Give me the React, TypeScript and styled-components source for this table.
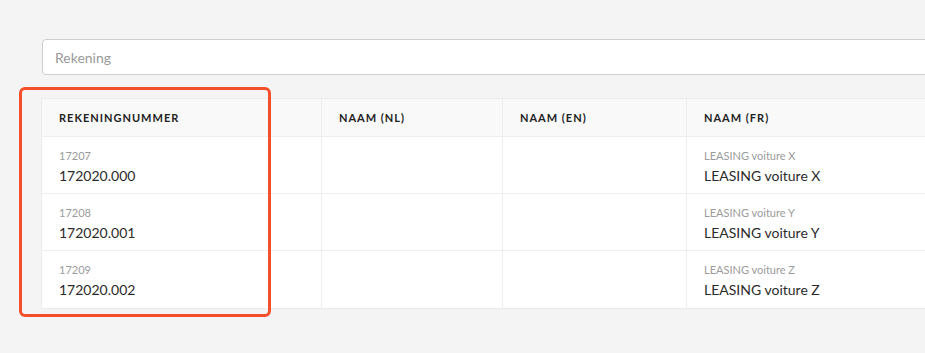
import React from "react";
import styled, { createGlobalStyle } from "styled-components";

const GlobalStyle = createGlobalStyle`
  html {
    overflow: hidden;
  }
  body {
    margin: 0;
    padding: 0;
    min-height: 353px;
    background: #f4f4f4;
    font-family: Lato, "Open Sans", "Liberation Sans", sans-serif;
    color: #333;
  }
`;

const Page = styled.div`
  position: relative;
  width: 1100px;
  padding: 39px 0 44px 42px;
`;

const SearchInput = styled.input`
  display: block;
  box-sizing: border-box;
  width: 100%;
  height: 36px;
  padding: 0 12px;
  border: 1px solid #cdcdcd;
  border-radius: 4px;
  background: #fff;
  font-family: inherit;
  font-size: 14px;
  color: #333;
  outline: none;

  &::placeholder {
    color: #9a9a9a;
  }
`;

const Table = styled.div`
  display: grid;
  grid-template-columns: 280px 181px 184px 1fr;
  margin-top: 24px;
  background: #fff;
  box-shadow: 0 0 0 1px #ececec, 0 1px 1px rgba(0, 0, 0, 0.04);
`;

const HeadCell = styled.div`
  box-sizing: border-box;
  height: 38px;
  display: flex;
  align-items: center;
  padding: 0 17px;
  background: #f9f9f9;
  border-right: 1px solid #eeeeee;
  border-bottom: 1px solid #eeeeee;
  font-size: 11px;
  font-weight: 700;
  letter-spacing: 1px;
  color: #222;
  text-transform: uppercase;
`;

const Cell = styled.div<{ $last?: boolean }>`
  box-sizing: border-box;
  height: 57px;
  display: flex;
  flex-direction: column;
  padding: 11px 17px 0;
  border-right: 1px solid #eeeeee;
  border-bottom: ${(p) => (p.$last ? "none" : "1px solid #eeeeee")};
`;

const SubText = styled.div`
  font-size: 11px;
  line-height: 15px;
  color: #9b9b9b;
`;

const MainText = styled.div`
  margin-top: 3px;
  font-size: 14px;
  line-height: 19px;
  color: #2b2b2b;
`;

const Highlight = styled.div`
  position: absolute;
  left: 19px;
  top: 87px;
  width: 252px;
  height: 230px;
  box-sizing: border-box;
  border: 3px solid #f44e2b;
  border-radius: 6px;
  pointer-events: none;
`;

type Row = { code: string; number: string; fr: string };

const rows: Row[] = [
  { code: "17207", number: "172020.000", fr: "LEASING voiture X" },
  { code: "17208", number: "172020.001", fr: "LEASING voiture Y" },
  { code: "17209", number: "172020.002", fr: "LEASING voiture Z" },
];

const columns = ["Rekeningnummer", "Naam (NL)", "Naam (EN)", "Naam (FR)"];

const App = () => {
  return (
    <>
      <GlobalStyle />
      <Page>
        <SearchInput placeholder="Rekening" />
        <Table>
          {columns.map((c) => (
            <HeadCell key={c}>{c}</HeadCell>
          ))}
          {rows.map((r, i) => {
            const last = i === rows.length - 1;
            return (
              <React.Fragment key={r.code}>
                <Cell $last={last}>
                  <SubText>{r.code}</SubText>
                  <MainText>{r.number}</MainText>
                </Cell>
                <Cell $last={last} />
                <Cell $last={last} />
                <Cell $last={last}>
                  <SubText>{r.fr}</SubText>
                  <MainText>{r.fr}</MainText>
                </Cell>
              </React.Fragment>
            );
          })}
        </Table>
        <Highlight />
      </Page>
    </>
  );
};

export default App;
